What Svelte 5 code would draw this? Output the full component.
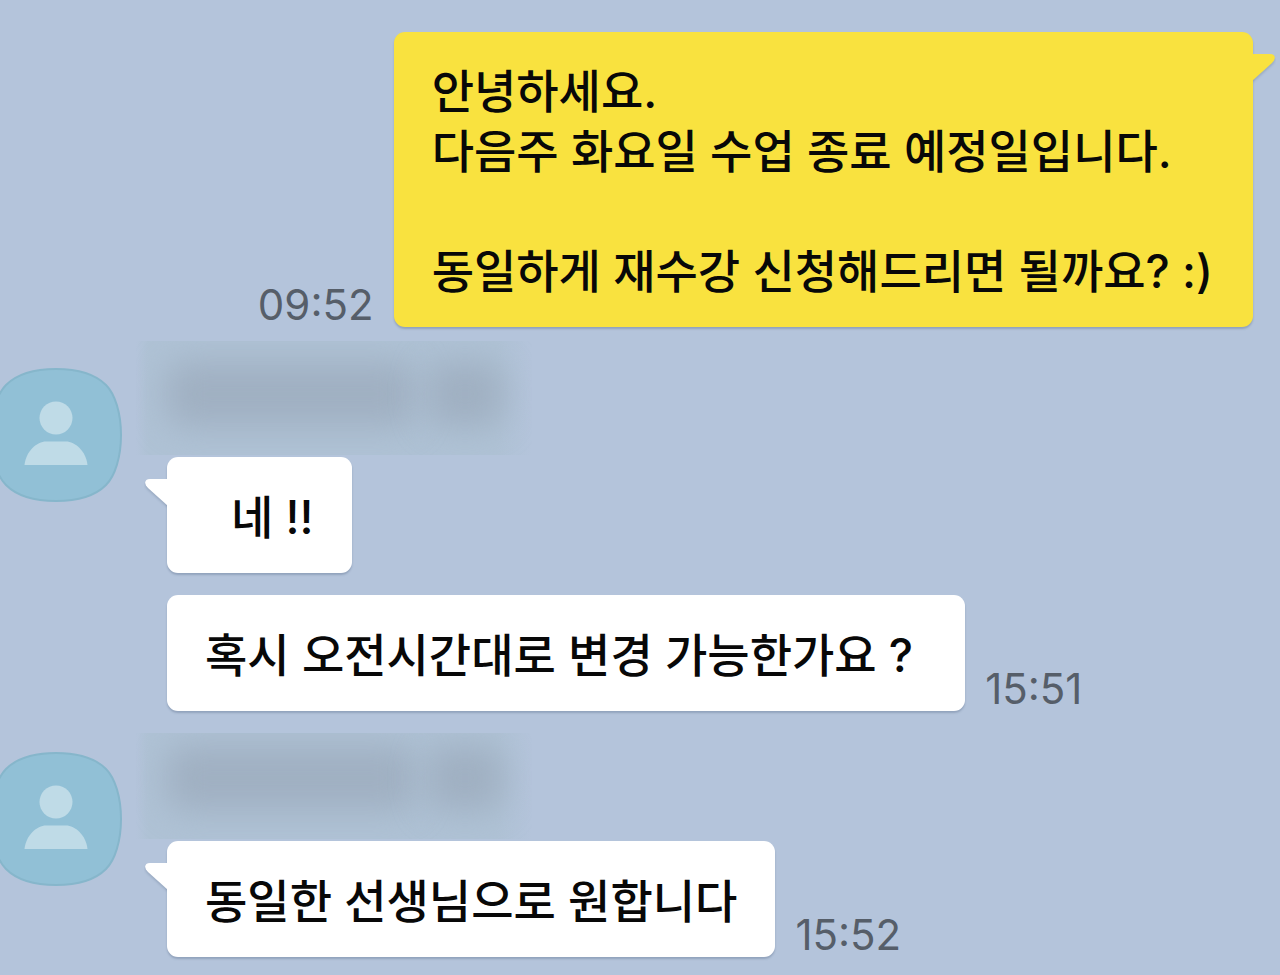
<script>
  const groups = [
    {
      id: 'first',
      messages: [
        { text: '네 !!', time: '', tail: true, indent: true },
        { text: '혹시 오전시간대로 변경 가능한가요 ?', time: '15:51', wide: true }
      ]
    },
    {
      id: 'second',
      messages: [{ text: '동일한 선생님으로 원합니다', time: '15:52', tail: true }]
    }
  ];
</script>

<main class="chat">
  <section class="sent">
    <time>09:52</time>
    <div class="bubble mine">
      <p>안녕하세요.<br />다음주 화요일 수업 종료 예정일입니다.<br /><br />동일하게 재수강 신청해드리면 될까요? :)</p>
      <svg class="tail" viewBox="0 0 24 30" aria-hidden="true">
        <path d="M0 1H18C24 1 24 6 20 10L0 28Z" fill="#f9e23f" />
      </svg>
    </div>
  </section>

  {#each groups as group (group.id)}
    <section class="received">
      <svg class="avatar" viewBox="0 0 124 134" aria-hidden="true">
        <path d="M56 1C82 1 97 8 106 17S121 45 121 67S115 108 106 117S82 133 56 133S15 126 6 117S-9 89 -9 67S-3 26 6 17S30 1 56 1Z" fill="#91c0d6" stroke="#86b6cb" stroke-width="2" />
        <circle cx="56" cy="50" r="16.500" fill="#bfdbe7" />
        <path d="M24.500 97C26 83 37 73.500 46 73.500H66C75 73.500 86 83 87.500 97Z" fill="#bfdbe7" />
      </svg>
      <div class="thread">
        <div class="name" aria-hidden="true"><span class="long"></span><span class="short"></span></div>
        {#each group.messages as message (message.text)}
          <div class="row">
            <div class="bubble" class:indent={message.indent} class:wide={message.wide}>
              <p>{message.text}</p>
              {#if message.tail}
                <svg class="tail" viewBox="0 0 24 30" aria-hidden="true">
                  <path d="M24 1H6C0 1 0 6 4 10L24 28Z" fill="#fff" />
                </svg>
              {/if}
            </div>
            {#if message.time}<time>{message.time}</time>{/if}
          </div>
        {/each}
      </div>
    </section>
  {/each}
</main>

<style>
  :global(body) {
    margin: 0;
    background: #b4c4db;
  }
  .chat {
    padding: 32px 27px 18px 0;
    font-family: Inter, 'Noto Sans CJK KR', sans-serif;
    color: #080808;
    overflow: hidden;
  }
  .sent {
    display: flex;
    justify-content: flex-end;
    align-items: flex-end;
    gap: 20px;
  }
  .bubble {
    position: relative;
    box-sizing: border-box;
    padding: 30px 38px 26px;
    border-radius: 11px;
    background: #fff;
    box-shadow: 0 2px 2px rgba(70, 90, 120, 0.3);
    font-size: 46px;
    font-weight: 500;
    line-height: 60px;
    white-space: nowrap;
  }
  p {
    margin: 0;
  }
  .mine {
    padding: 29px 40px 26px 38px;
    background: #f9e23f;
  }
  .indent {
    padding-left: 64px;
  }
  .wide {
    padding-right: 52px;
  }
  .tail {
    position: absolute;
    top: 21px;
    left: -23px;
    width: 24px;
    height: 30px;
    filter: drop-shadow(0 2px 1px rgba(70, 90, 120, 0.25));
    clip-path: inset(0 1px -4px 0);
  }
  .mine .tail {
    left: auto;
    right: -23px;
    clip-path: inset(0 0 -4px 1px);
  }
  time {
    color: #565e69;
    font-size: 42px;
    line-height: 44px;
  }
  .received {
    display: flex;
    margin-top: 14px;
  }
  .avatar {
    flex: none;
    width: 124px;
    height: 134px;
    margin: 27px 12px 0 0;
  }
  .thread {
    display: flex;
    flex-direction: column;
    gap: 22px;
  }
  .name {
    box-sizing: border-box;
    display: flex;
    gap: 10px;
    width: 396px;
    height: 114px;
    margin-bottom: -20px;
    padding: 20px 0 28px 30px;
    overflow: hidden;
    background: linear-gradient(to right, #afc2d500, #afc2d5 12px, #afc2d5 360px, #afc2d500);
  }
  .received + .received .name {
    clip-path: inset(8px 0 0);
  }
  .name span {
    border-radius: 20px;
    background: #a0b0c2;
    filter: blur(16px);
  }
  .long {
    width: 250px;
  }
  .short {
    width: 78px;
  }
  .row {
    display: flex;
    align-items: flex-end;
    gap: 20px;
    margin-left: 31px;
  }
</style>
